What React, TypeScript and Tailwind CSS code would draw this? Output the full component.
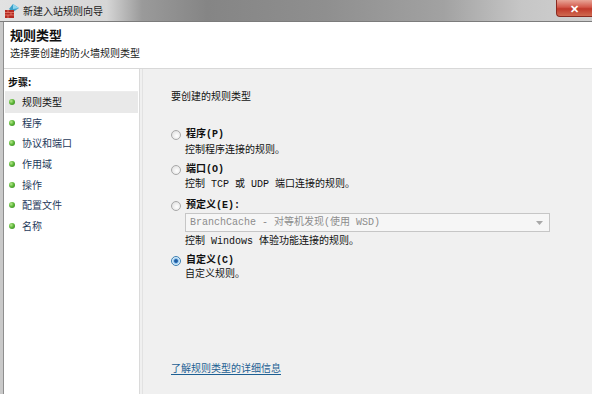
import React from "react";

const Bullet = () => (
  <span className="w-[6px] h-[6px] rounded-full bg-[radial-gradient(circle_at_35%_35%,#b8e890_0,#5fb83a_45%,#2f7a1e_100%)] shrink-0" />
);

const Radio = ({ checked }: { checked?: boolean }) =>
  checked ? (
    <span className="w-[10px] h-[10px] rounded-full border border-[#3c7fb1] bg-[radial-gradient(circle,#174a86_0,#2e6fb6_28%,#8cc2ea_42%,#d7ebfa_60%,#eef6fd_100%)] shrink-0" />
  ) : (
    <span className="w-[10px] h-[10px] rounded-full border border-[#a8a8a8] bg-[radial-gradient(circle_at_60%_60%,#ffffff_0,#e9e9e9_60%,#d4d4d4_100%)] shrink-0" />
  );

export default function App() {
  const steps = ["规则类型", "程序", "协议和端口", "作用域", "操作", "配置文件", "名称"];
  return (
    <div className="w-[592px] h-[394px] overflow-hidden flex flex-col bg-[#f0f0f0] font-['Noto_Sans_CJK_SC',sans-serif] text-[10px] leading-[14px] text-[#111]">
      {/* Title bar */}
      <div className="h-[22px] shrink-0 flex items-center bg-[linear-gradient(90deg,#e2e2e2_0%,#d6d6d6_18%,#9a9a9a_24%,#858585_35%,#8f8f8f_55%,#a2a2a2_75%,#c6c6c6_88%,#d0d0d0_100%)] border-b border-[#7c7c7c]">
        <svg width="16" height="16" viewBox="0 0 16 16" className="ml-[4px] shrink-0">
          <path d="M9 1 L15 5 L9 9 L5 6 Z" fill="#3aa0c8" />
          <path d="M9 1 L15 5 L9 6 Z" fill="#8fd6ef" />
          <rect x="1" y="7" width="9" height="8" fill="#b52a22" />
          <path d="M1 9.5 H10 M1 12 H10 M4 7 V9.5 M7 9.5 V12 M4 12 V15" stroke="#e88070" strokeWidth="0.8" />
        </svg>
        <span className="ml-[3px] text-[#1a1a1a]">新建入站规则向导</span>
        <div className="flex-1" />
        <div className="self-start w-[36px] h-[17px] rounded-bl-[4px] bg-[linear-gradient(180deg,#e8a597_0%,#d3584a_45%,#c0392b_55%,#d06a50_100%)] border border-[#8a2a20] border-t-0 border-r-0 flex items-center justify-center text-white font-bold text-[11px] leading-none">
          ✕
        </div>
      </div>

      <div className="flex-1 flex min-h-0">
        {/* left frame */}
        <div className="w-[4px] shrink-0 bg-[#c9c9c9] border-r border-[#8e8e8e]" />

        <div className="flex-1 flex flex-col min-w-0">
          {/* Header */}
          <div className="h-[47px] shrink-0 bg-white border-b border-[#d8d8d8] pl-[6px] flex flex-col">
            <div className="mt-[5px] text-[13px] leading-[16px] font-bold text-[#111]">规则类型</div>
            <div className="mt-[3px] text-[#222]">选择要创建的防火墙规则类型</div>
          </div>

          <div className="flex-1 flex min-h-0">
            {/* Sidebar */}
            <div className="w-[136px] shrink-0 bg-white border-r border-[#dadada] flex flex-col pl-[1px] pr-[1px]">
              <div className="h-[23px] pl-[3px] pt-[6px] font-bold text-[#111] border-b border-[#ececec]">步骤:</div>
              {steps.map((s, i) => (
                <div
                  key={s}
                  className={`h-[20.6px] flex items-center gap-[7px] pl-[4px] ${i === 0 ? "bg-[#e9e9e9] text-[#111]" : "text-[#1f3b5c]"}`}
                >
                  <Bullet />
                  <span>{s}</span>
                </div>
              ))}
            </div>

            {/* Main */}
            <div className="flex-1 ml-[2px] border-l border-[#e2e2e2] bg-[#f0f0f0] pl-[28px] flex flex-col font-['Liberation_Mono','Noto_Sans_CJK_SC',monospace]">
              <div className="mt-[20px] font-['Noto_Sans_CJK_SC',sans-serif]">要创建的规则类型</div>

              <div className="mt-[25px] flex items-center gap-[5px]">
                <Radio />
                <span className="font-bold">程序(P)</span>
              </div>
              <div className="ml-[14px] mt-[2px]">控制程序连接的规则。</div>

              <div className="mt-[5px] flex items-center gap-[5px]">
                <Radio />
                <span className="font-bold">端口(O)</span>
              </div>
              <div className="ml-[14px] mt-[1px]">控制 TCP 或 UDP 端口连接的规则。</div>

              <div className="mt-[7px] flex items-center gap-[5px]">
                <Radio />
                <span className="font-bold">预定义(E):</span>
              </div>
              <div className="ml-[14px] mr-[42px] mt-0 h-[19px] border border-[#c6c6c6] bg-[#f6f6f6] flex items-center pl-[4px] pr-[6px] text-[#8c8c8c]">
                <span className="flex-1">BranchCache - 对等机发现(使用 WSD)</span>
                <svg width="7" height="4" viewBox="0 0 7 4">
                  <path d="M0 0 H7 L3.5 4 Z" fill="#a8a8a8" />
                </svg>
              </div>
              <div className="ml-[14px] mt-[3px]">控制 Windows 体验功能连接的规则。</div>

              <div className="mt-[5px] flex items-center gap-[5px]">
                <Radio checked />
                <span className="font-bold">自定义(C)</span>
              </div>
              <div className="ml-[14px] mt-[0px]">自定义规则。</div>

              <div className="mt-[79px] font-['Noto_Sans_CJK_SC',sans-serif]">
                <span className="text-[#1d5f93] underline underline-offset-2">了解规则类型的详细信息</span>
              </div>
            </div>
          </div>
        </div>
      </div>
    </div>
  );
}
